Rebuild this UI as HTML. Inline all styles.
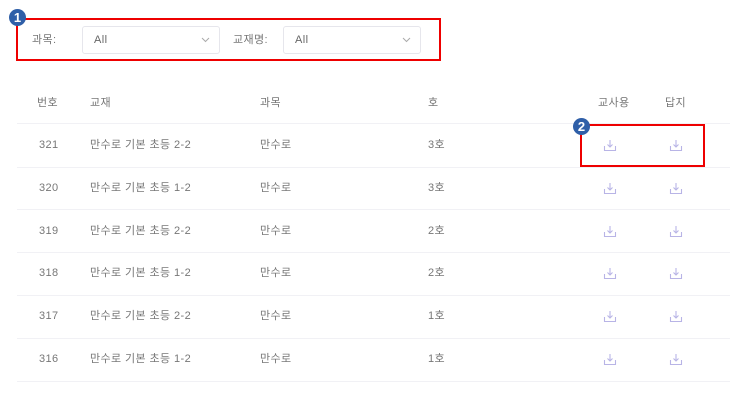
<!DOCTYPE html>
<html><head><meta charset="utf-8"><style>
body{margin:0;width:740px;height:412px;background:#fff;font-family:"Liberation Sans","Noto Sans CJK KR",sans-serif;color:#777;font-size:11px;position:relative;overflow:hidden;letter-spacing:0.4px}
.a{position:absolute}
.box{border:2px solid #e00;box-sizing:border-box}
.badge{width:17px;height:17px;border-radius:50%;background:#2f5fa8;color:#fff;font-weight:bold;font-size:13px;text-align:center;line-height:17px;letter-spacing:0}
.sel{border:1px solid #e6e6ec;border-radius:3px;height:28px;box-sizing:border-box;padding-left:11px;line-height:26px;color:#666}
.sel svg{position:absolute;right:9px;top:10px}
.line{position:absolute;left:17px;width:713px;height:1px;background:#f1f1f5}
.t{position:absolute;line-height:14px}
</style></head><body>
<div class="a box" style="left:16px;top:18px;width:425px;height:43px"></div>
<div class="a badge" style="left:9px;top:9px">1</div>
<div class="t" style="left:32px;top:33px">과목:</div>
<div class="a sel" style="left:82px;top:26px;width:138px">All<svg width="9" height="6"><path d="M1 1l3.5 3.5L8 1" stroke="#aaa" fill="none"/></svg></div>
<div class="t" style="left:233px;top:33px">교재명:</div>
<div class="a sel" style="left:283px;top:26px;width:138px">All<svg width="9" height="6"><path d="M1 1l3.5 3.5L8 1" stroke="#aaa" fill="none"/></svg></div>

<div class="t" style="left:37px;top:96px">번호</div>
<div class="t" style="left:90px;top:96px">교재</div>
<div class="t" style="left:260px;top:96px">과목</div>
<div class="t" style="left:428px;top:96px">호</div>
<div class="t" style="left:598px;top:96px">교사용</div>
<div class="t" style="left:665px;top:96px">답지</div>
<div class="line" style="top:123px"></div>

<div id="rows"></div>
<div class="a box" style="left:580px;top:124px;width:125px;height:43px"></div>
<div class="a badge" style="left:573px;top:118px">2</div>
<script>
var d=[["321","만수로 기본 초등 2-2","3호"],["320","만수로 기본 초등 1-2","3호"],["319","만수로 기본 초등 2-2","2호"],["318","만수로 기본 초등 1-2","2호"],["317","만수로 기본 초등 2-2","1호"],["316","만수로 기본 초등 1-2","1호"]];
var ic='<svg width="14" height="13" viewBox="0 0 14 13"><path d="M7 1v7M4.5 5.5L7 8l2.5-2.5M1.5 7v4.5h11V7" stroke="#b8b4e6" stroke-width="1.1" fill="none"/></svg>';
var h='';d.forEach(function(r,i){var y=124+i*42.8;var ty=y+14;
h+='<div class="t" style="left:39px;top:'+ty+'px">'+r[0]+'</div><div class="t" style="left:90px;top:'+ty+'px">'+r[1]+'</div><div class="t" style="left:260px;top:'+ty+'px">만수로</div><div class="t" style="left:428px;top:'+ty+'px">'+r[2]+'</div><div class="a" style="left:603px;top:'+(ty+1)+'px">'+ic+'</div><div class="a" style="left:669px;top:'+(ty+1)+'px">'+ic+'</div><div class="line" style="top:'+(y+42.5)+'px"></div>';});
document.getElementById('rows').innerHTML=h;
</script>
</body></html>
